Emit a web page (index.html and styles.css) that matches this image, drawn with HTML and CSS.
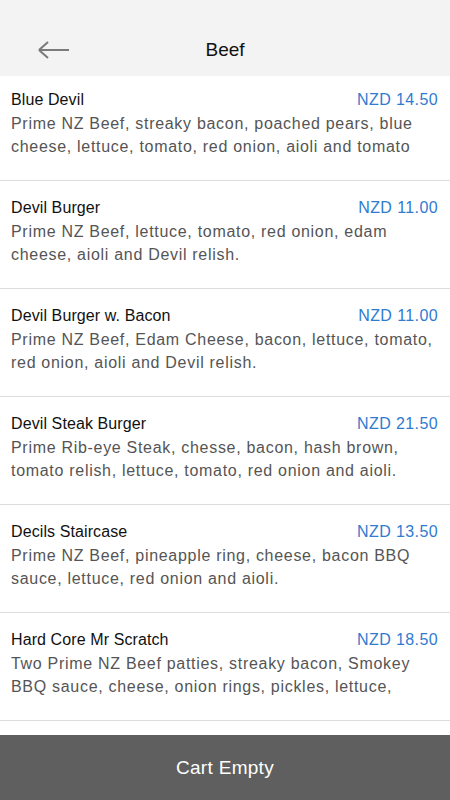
FILE: index.html
```html
<html>
<head>
<title>Beef</title>
<link rel="stylesheet" href="styles.css">
</head>
<body>

<div class="page">
  <div class="header">
    <span class="back">
      <svg width="32" height="18" viewBox="0 0 32 18"><path d="M1 9H31M1 9L10 1M1 9L10 17" fill="none" stroke="#7a7a7a" stroke-width="2"/></svg>
    </span>
    <div class="title">Beef</div>
  </div>

  <div class="list">
    <div class="item">
      <div class="row"><span class="name">Blue Devil</span><span class="price">NZD 14.50</span></div>
      <p class="desc">Prime NZ Beef, streaky bacon, poached pears, blue cheese, lettuce, tomato, red onion, aioli and tomato</p>
    </div>
    <div class="item">
      <div class="row"><span class="name">Devil Burger</span><span class="price">NZD 11.00</span></div>
      <p class="desc">Prime NZ Beef, lettuce, tomato, red onion, edam cheese, aioli and Devil relish.</p>
    </div>
    <div class="item">
      <div class="row"><span class="name">Devil Burger w. Bacon</span><span class="price">NZD 11.00</span></div>
      <p class="desc">Prime NZ Beef, Edam Cheese, bacon, lettuce, tomato, red onion, aioli and Devil relish.</p>
    </div>
    <div class="item">
      <div class="row"><span class="name">Devil Steak Burger</span><span class="price">NZD 21.50</span></div>
      <p class="desc">Prime Rib-eye Steak, chesse, bacon, hash brown, tomato relish, lettuce, tomato, red onion and aioli.</p>
    </div>
    <div class="item">
      <div class="row"><span class="name">Decils Staircase</span><span class="price">NZD 13.50</span></div>
      <p class="desc">Prime NZ Beef, pineapple ring, cheese, bacon BBQ sauce, lettuce, red onion and aioli.</p>
    </div>
    <div class="item">
      <div class="row"><span class="name">Hard Core Mr Scratch</span><span class="price">NZD 18.50</span></div>
      <p class="desc">Two Prime NZ Beef patties, streaky bacon, Smokey BBQ sauce, cheese, onion rings, pickles, lettuce,</p>
    </div>
  </div>

  <div class="cart">Cart Empty</div>
</div>

</body>
</html>
```

FILE: styles.css
```css
body { margin: 0; background: #ffffff; font-family: "Liberation Sans", Arial, sans-serif; }
.page { display: flex; flex-direction: column; height: 800px; overflow: hidden; }

.header { position: relative; height: 76px; background: #f3f3f3; display: flex; align-items: flex-end; justify-content: center; flex: none; }
.title { font-size: 19px; color: #111; line-height: 20px; padding-bottom: 16px; }
.back { position: absolute; left: 38px; top: 41px; line-height: 0; }

.list { flex: 1; overflow: hidden; }
.item { padding: 17px 12px 22px 11px; border-bottom: 1px solid #dddddd; }
.item:first-child { padding-top: 14px; }
.row { display: flex; justify-content: space-between; align-items: baseline; line-height: 20px; }
.name { font-size: 16px; color: #111; letter-spacing: 0.1px; }
.price { font-size: 16px; color: #2f7bd0; letter-spacing: 0.4px; }
.desc { margin: 2px 0 0 0; font-size: 16px; line-height: 23px; color: #555; letter-spacing: 0.7px; }

.cart { flex: none; height: 65px; background: #5e5f5e; color: #fff; font-size: 19px; display: flex; align-items: center; justify-content: center; letter-spacing: 0.3px; }
```
